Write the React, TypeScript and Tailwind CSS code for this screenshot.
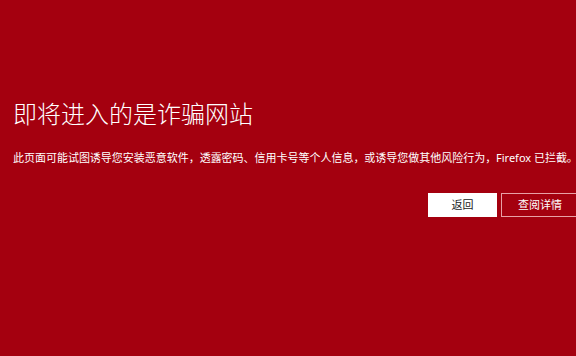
export default function App() {
  return (
    <div
      className="w-[576px] h-[356px] overflow-hidden bg-[#a4000f] text-white"
      style={{ fontFamily: '"Noto Sans", "Noto Sans CJK SC", sans-serif' }}
    >
      <div className="ml-[13px] w-[566px] pt-[98px]">
        <h1 className="text-[24px] leading-[32px] font-light">即将进入的是诈骗网站</h1>
        <p className="mt-[20px] text-[11px] leading-[16px] whitespace-nowrap tracking-[-0.02px]">
          此页面可能试图诱导您安装恶意软件，透露密码、信用卡号等个人信息，或诱导您做其他风险行为，Firefox 已拦截。
        </p>
        <div className="mt-[27px] flex justify-end gap-[4px]">
          <button className="h-[24px] min-w-[69px] px-[17px] bg-white text-[#222] text-[11px] leading-[24px]">
            返回
          </button>
          <button className="h-[24px] min-w-[69px] px-[16px] border border-[#e8a0a6] text-white text-[11px] leading-[22px]">
            查阅详情
          </button>
        </div>
      </div>
    </div>
  );
}
